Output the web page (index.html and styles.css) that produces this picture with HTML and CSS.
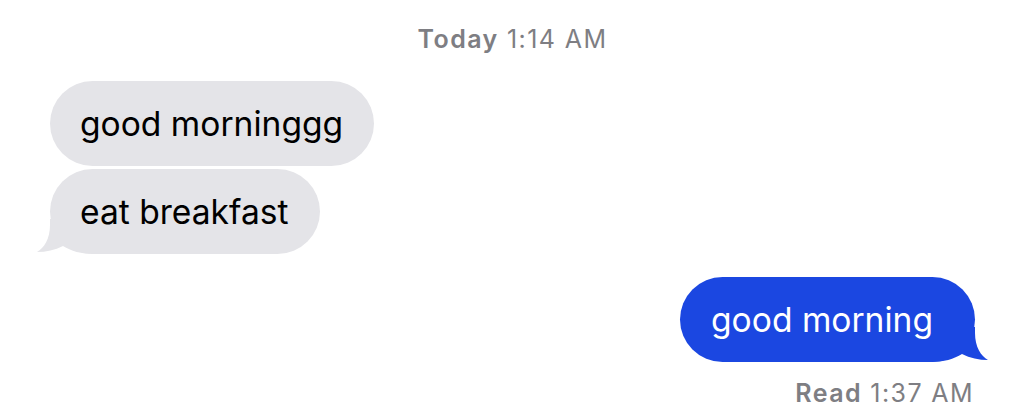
FILE: index.html
```html
<!DOCTYPE html>
<html lang="en">
<head>
    <meta charset="utf-8">
    <title>Messages</title>
    <link rel="stylesheet" href="styles.css">
</head>
<body>
    <div id="thread">
        <p class="stamp"><b>Today</b> 1:14 AM</p>

        <div class="bubble received">good morninggg</div>
        <div class="bubble received tail">
            eat breakfast
            <svg class="tail-shape" viewBox="0 0 60 35" aria-hidden="true">
                <path d="M15 0 L15 6 C15 20 9 29 2 33 C11 33 20 31 28 27 C36 32 46 35 60 35 L60 0 Z"></path>
            </svg>
        </div>

        <div class="bubble sent tail">
            good morning
            <svg class="tail-shape" viewBox="0 0 60 35" aria-hidden="true">
                <path d="M15 0 L15 6 C15 20 9 29 2 33 C11 33 20 31 28 27 C36 32 46 35 60 35 L60 0 Z"></path>
            </svg>
        </div>
        <p class="stamp read"><b>Read</b> 1:37 AM</p>
    </div>
</body>
</html>
```

FILE: styles.css
```css
:root {
    --gray-bubble: #e4e4e8;
    --blue-bubble: #1b47e1;
    --stamp-color: #7e7e83;
}

html {
    font-family: Inter, "Liberation Sans", sans-serif;
    color: #000;
    background: #fff;
}

body {
    margin: 0;
}

#thread {
    display: flex;
    flex-direction: column;
    padding: 24px 49px 0 50px;
}

.stamp {
    margin: 0;
    font-size: 25px;
    line-height: 30px;
    letter-spacing: 1.4px;
    color: var(--stamp-color);
    text-align: center;
}

.stamp b {
    font-weight: 600;
}

.stamp.read {
    margin-top: 16px;
    padding-right: 1px;
    text-align: right;
}

.bubble {
    position: relative;
    isolation: isolate;
    align-self: flex-start;
    padding: 21px 31px 21px 30px;
    font-size: 33.6px;
    line-height: 43px;
    border-radius: 43px;
    background: var(--gray-bubble);
}

.bubble + .bubble {
    margin-top: 3px;
}

.received:first-of-type {
    margin-top: 27px;
}

.bubble.sent {
    align-self: flex-end;
    margin-top: 23px;
    padding: 21px 42px 21px 31px;
    color: #fff;
    background: var(--blue-bubble);
}

/* --- Tail: sits behind the text, joins the bubble's bottom corner --- */
.tail-shape {
    position: absolute;
    z-index: -1;
    bottom: 0;
    left: -15px;
    width: 60px;
    height: 35px;
}

.received .tail-shape path {
    fill: var(--gray-bubble);
}

.sent .tail-shape {
    left: auto;
    right: -15px;
    transform: scaleX(-1);
}

.sent .tail-shape path {
    fill: var(--blue-bubble);
}
```
